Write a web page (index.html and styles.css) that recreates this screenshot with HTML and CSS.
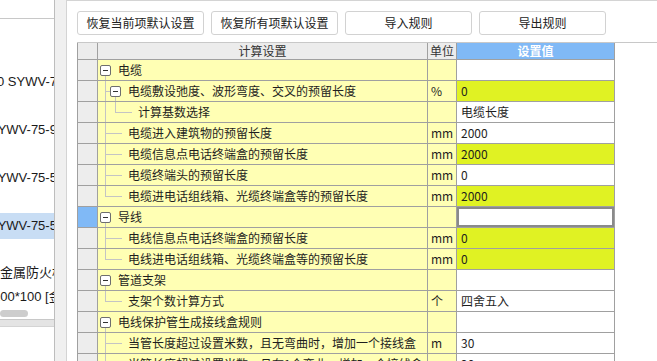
FILE: index.html
```html
<!DOCTYPE html>
<html lang="zh-CN">
<head>
    <meta charset="UTF-8">
    <title>计算设置</title>
    <link rel="stylesheet" href="styles.css">
</head>
<body>
    <!-- 左侧构件列表 -->
    <div class="side">
        <div class="side-top"></div>
        <div class="side-list">
            <div class="side-item" style="text-indent:-3px">0 SYWV-75-7 (1)</div>
            <div class="side-item" style="text-indent:-11px">SYWV-75-9 (2)</div>
            <div class="side-item" style="text-indent:-11px">SYWV-75-5 (3)</div>
            <div class="side-item sel" style="text-indent:-11px">SYWV-75-5 (4)</div>
            <div class="side-item multi">
                <div>金属防火桥架</div>
                <div style="text-indent:-7px">100*100 [金属</div>
            </div>
            <div class="scroll-pill"></div>
        </div>
        <div class="side-foot"></div>
    </div>

    <div class="strip"></div>

    <!-- 计算设置 -->
    <div class="main">
        <div class="toolbar">
            <button class="btn">恢复当前项默认设置</button>
            <button class="btn">恢复所有项默认设置</button>
            <button class="btn">导入规则</button>
            <button class="btn">导出规则</button>
        </div>

        <div class="grid">
            <div class="row head">
                <div></div>
                <div>计算设置</div>
                <div>单位</div>
                <div class="hval">设置值</div>
            </div>

            <div class="row">
                <div class="rh"></div>
                <div class="name"><span class="s g"><i class="box"></i></span><span class="txt gt">电缆</span></div>
                <div class="unit"></div>
                <div class="val"></div>
            </div>
            <div class="row">
                <div class="rh"></div>
                <div class="name"><span class="s t"></span><span class="s g"><i class="box"></i></span><span class="txt gt">电缆敷设弛度、波形弯度、交叉的预留长度</span></div>
                <div class="unit">%</div>
                <div class="val hl">0</div>
            </div>
            <div class="row">
                <div class="rh"></div>
                <div class="name"><span class="s v"></span><span class="s l"></span><span class="s h"></span><span class="txt">计算基数选择</span></div>
                <div class="unit"></div>
                <div class="val">电缆长度</div>
            </div>
            <div class="row">
                <div class="rh"></div>
                <div class="name"><span class="s t"></span><span class="s h"></span><span class="txt">电缆进入建筑物的预留长度</span></div>
                <div class="unit">mm</div>
                <div class="val">2000</div>
            </div>
            <div class="row">
                <div class="rh"></div>
                <div class="name"><span class="s t"></span><span class="s h"></span><span class="txt">电缆信息点电话终端盒的预留长度</span></div>
                <div class="unit">mm</div>
                <div class="val hl">2000</div>
            </div>
            <div class="row">
                <div class="rh"></div>
                <div class="name"><span class="s t"></span><span class="s h"></span><span class="txt">电缆终端头的预留长度</span></div>
                <div class="unit">mm</div>
                <div class="val">0</div>
            </div>
            <div class="row">
                <div class="rh"></div>
                <div class="name"><span class="s l"></span><span class="s h"></span><span class="txt">电缆进电话组线箱、光缆终端盒等的预留长度</span></div>
                <div class="unit">mm</div>
                <div class="val hl">2000</div>
            </div>

            <div class="row">
                <div class="rh cur"></div>
                <div class="name"><span class="s g"><i class="box"></i></span><span class="txt gt">导线</span></div>
                <div class="unit"></div>
                <div class="val edit"></div>
            </div>
            <div class="row">
                <div class="rh"></div>
                <div class="name"><span class="s t"></span><span class="s h"></span><span class="txt">电线信息点电话终端盒的预留长度</span></div>
                <div class="unit">mm</div>
                <div class="val hl">0</div>
            </div>
            <div class="row">
                <div class="rh"></div>
                <div class="name"><span class="s l"></span><span class="s h"></span><span class="txt">电线进电话组线箱、光缆终端盒等的预留长度</span></div>
                <div class="unit">mm</div>
                <div class="val hl">0</div>
            </div>

            <div class="row">
                <div class="rh"></div>
                <div class="name"><span class="s g"><i class="box"></i></span><span class="txt gt">管道支架</span></div>
                <div class="unit"></div>
                <div class="val"></div>
            </div>
            <div class="row">
                <div class="rh"></div>
                <div class="name"><span class="s l"></span><span class="s h"></span><span class="txt">支架个数计算方式</span></div>
                <div class="unit">个</div>
                <div class="val">四舍五入</div>
            </div>

            <div class="row">
                <div class="rh"></div>
                <div class="name"><span class="s g"><i class="box"></i></span><span class="txt gt">电线保护管生成接线盒规则</span></div>
                <div class="unit"></div>
                <div class="val"></div>
            </div>
            <div class="row">
                <div class="rh"></div>
                <div class="name"><span class="s t"></span><span class="s h"></span><span class="txt">当管长度超过设置米数，且无弯曲时，增加一个接线盒</span></div>
                <div class="unit">m</div>
                <div class="val">30</div>
            </div>
            <div class="row">
                <div class="rh"></div>
                <div class="name"><span class="s t"></span><span class="s h"></span><span class="txt">当管长度超过设置米数，且有1个弯曲，增加一个接线盒</span></div>
                <div class="unit">m</div>
                <div class="val">20</div>
            </div>
        </div>
    </div>
</body>
</html>
```

FILE: styles.css
```css
* {
    box-sizing: border-box;
}

html, body {
    margin: 0;
}

body {
    display: flex;
    width: 657px;
    height: 361px;
    overflow: hidden;
    background: #fff;
    color: #1e1e1e;
    font-family: "Noto Sans CJK SC", sans-serif;
    font-size: 12px;
}

/* 左侧列表 */
.side {
    flex: none;
    width: 55px;
    border-right: 1px solid #bdbdbd;
    overflow: hidden;
    display: flex;
    flex-direction: column;
    font-family: "Liberation Sans", "Noto Sans CJK SC", sans-serif;
    font-size: 13px;
    color: #1a1a1a;
}

.side-top {
    flex: none;
    height: 19px;
    border-bottom: 1px solid #c8c8c8;
}

.side-list {
    flex: none;
    height: 301px;
    padding-top: 50px;
    border-bottom: 1px solid #c8c8c8;
    display: flex;
    flex-direction: column;
}

.side-item {
    flex: none;
    height: 26px;
    line-height: 26px;
    margin-bottom: 22px;
    white-space: nowrap;
}

.side-item.sel {
    background: #c8ddf4;
}

.side-item.multi {
    height: auto;
    line-height: 24px;
    margin-bottom: 0;
}

.scroll-pill {
    flex: none;
    width: 28px;
    height: 7px;
    margin-top: 1px;
    border-radius: 4px;
    background: #cdcdcd;
}

.side-foot {
    flex: none;
    height: 7px;
    background: #e4e4e4;
    border-bottom: 1px solid #d4d4d4;
}

.strip {
    flex: none;
    width: 11px;
    background: #f0f0f0;
}

/* 右侧设置 */
.main {
    flex: 1;
    min-width: 0;
    padding-left: 10px;
    border-left: 1px solid #d4d4d4;
    border-top: 1px solid #d4d4d4;
}

.toolbar {
    display: flex;
    gap: 7px;
    padding: 10px 0 7px;
    border-bottom: 1px solid #c8c8c8;
}

.btn {
    width: 127px;
    height: 24px;
    padding: 0;
    border: 1px solid #d2d2d2;
    border-radius: 3px;
    background: #fff;
    color: #222;
    font-family: "Noto Sans CJK SC", sans-serif;
    font-size: 12px;
    line-height: 22px;
}

.grid {
    width: 538px;
    border-left: 1px solid #a0a0a0;
}

.row {
    display: grid;
    grid-template-columns: 20px 330px 29px 158px;
    height: 21px;
}

.row > div {
    border-right: 1px solid #a0a0a0;
    border-bottom: 1px solid #a0a0a0;
    line-height: 20px;
    white-space: nowrap;
    overflow: hidden;
}

.row.head {
    height: 17px;
}

.row.head > div {
    line-height: 16px;
    background: #ececec;
    color: #333;
    text-align: center;
}

.row.head > .hval {
    background: #80b9f6;
    color: #fff;
    font-weight: bold;
}

.rh {
    background: #ededed;
}

.rh.cur {
    background: #80b9f6;
}

.name {
    display: flex;
    padding-left: 2px;
    background: #ffffb4;
}

.unit {
    padding-left: 3px;
    background: #ffffb4;
}

.val {
    padding-left: 4px;
    background: #fff;
}

.val.hl {
    background: #e0f223;
}

.val.edit {
    box-shadow: inset 0 0 0 2px #8a8a8a;
}

/* 树形连线 */
.s {
    flex: none;
    width: 10px;
    height: 20px;
}

.s.v {
    background: linear-gradient(#c4c4c4, #c4c4c4) 5px 0 / 1px 100% no-repeat;
}

.s.t {
    background:
        linear-gradient(#c4c4c4, #c4c4c4) 5px 0 / 1px 100% no-repeat,
        linear-gradient(#c4c4c4, #c4c4c4) 5px 10px / 5px 1px no-repeat;
}

.s.l {
    background:
        linear-gradient(#c4c4c4, #c4c4c4) 5px 0 / 1px 11px no-repeat,
        linear-gradient(#c4c4c4, #c4c4c4) 5px 10px / 5px 1px no-repeat;
}

.s.h {
    width: 12px;
    background: linear-gradient(#c4c4c4, #c4c4c4) 0 10px / 100% 1px no-repeat;
}

.s.g {
    background: linear-gradient(#c4c4c4, #c4c4c4) 5px 10px / 1px 10px no-repeat;
}

.box {
    display: block;
    width: 11px;
    height: 11px;
    margin-top: 5px;
    border: 1px solid #6e6e6e;
    border-radius: 2px;
    background: linear-gradient(#333, #333) center / 5px 1px no-repeat, #fff;
}

.txt {
    margin-left: 6px;
}

.txt.gt {
    margin-left: 8px;
}
```
